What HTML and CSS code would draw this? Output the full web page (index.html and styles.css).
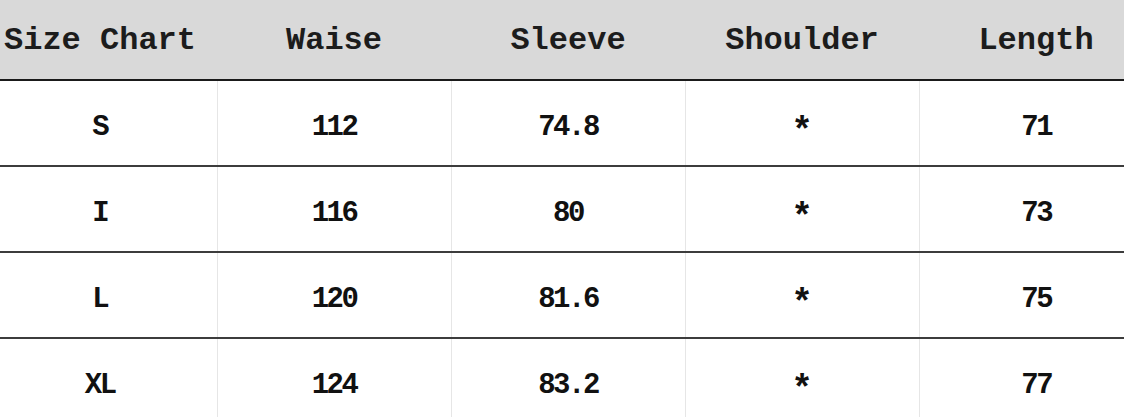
FILE: index.html
```html
<!DOCTYPE html>
<html lang="en">
<head>
<meta charset="utf-8">
<title>Size Chart</title>
<link rel="stylesheet" href="styles.css">
</head>
<body>
<table class="chart">
  <thead>
    <tr>
      <th>Size Chart</th>
      <th>Waise</th>
      <th>Sleeve</th>
      <th>Shoulder</th>
      <th>Length</th>
    </tr>
  </thead>
  <tbody>
    <tr><td>S</td><td>112</td><td>74.8</td><td><span class="star">*</span></td><td>71</td></tr>
    <tr><td>I</td><td>116</td><td>80</td><td><span class="star">*</span></td><td>73</td></tr>
    <tr><td>L</td><td>120</td><td>81.6</td><td><span class="star">*</span></td><td>75</td></tr>
    <tr><td>XL</td><td>124</td><td>83.2</td><td><span class="star">*</span></td><td>77</td></tr>
  </tbody>
</table>
</body>
</html>
```
FILE: styles.css
```css
html, body {
  margin: 0;
  padding: 0;
  background: #ffffff;
  overflow: hidden;
}

.chart {
  margin-left: -17px;
  width: 1170px;
  border-collapse: collapse;
  table-layout: fixed;
  font-family: "Liberation Mono", "DejaVu Sans Mono", monospace;
  color: #111111;
}

.chart th {
  height: 80px;
  padding: 2px 0 0 0;
  background: #d9d9d9;
  border-bottom: 2px solid #1a1a1a;
  font-size: 32px;
  font-weight: bold;
  color: #1c1c1c;
  text-align: center;
  vertical-align: middle;
  width: 234px;
  box-sizing: border-box;
}

.chart td {
  height: 86px;
  padding: 8px 0 0 0;
  border-bottom: 2px solid #3c3c3c;
  border-left: 1px solid #e6e6e6;
  font-size: 29px;
  letter-spacing: -2.5px;
  font-weight: bold;
  text-align: center;
  vertical-align: middle;
  box-sizing: border-box;
}

.chart td:first-child {
  border-left: none;
}

.star {
  display: inline-block;
  font-size: 36px;
  letter-spacing: 0;
  transform: translateY(5px);
}
```
